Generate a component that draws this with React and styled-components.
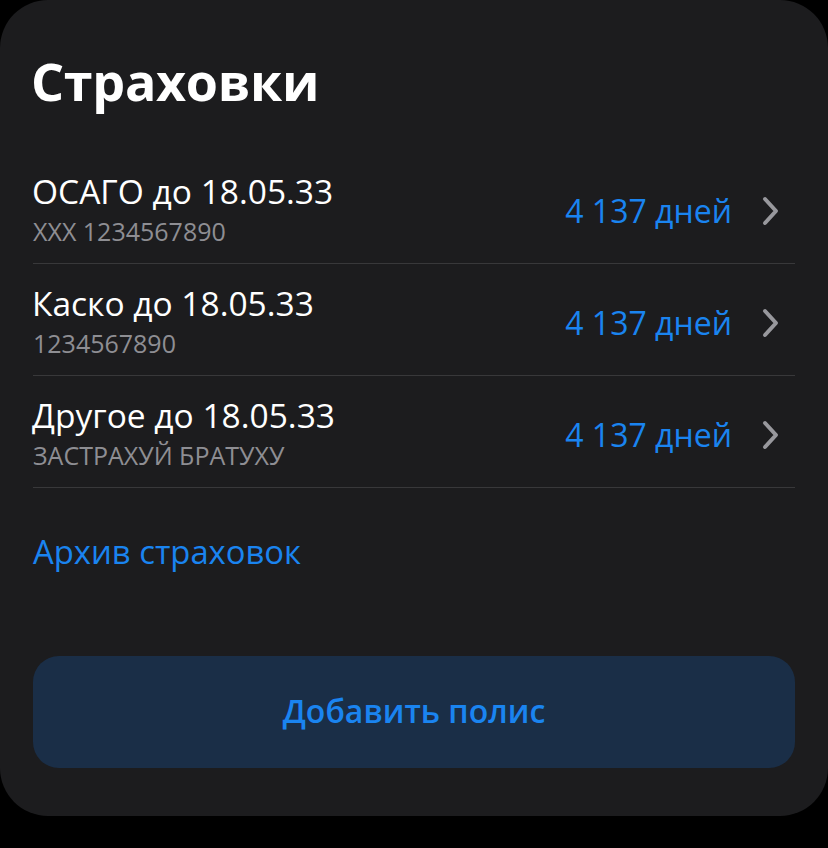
import React from 'react'
import styled, { createGlobalStyle } from 'styled-components'

const GlobalStyle = createGlobalStyle`
  html, body {
    margin: 0;
    padding: 0;
    background: #000;
  }
  body {
    font-family: "Open Sans", "Noto Sans", sans-serif;
    -webkit-font-smoothing: antialiased;
  }
`;

const Card = styled.div`
  width: 828px;
  height: 816px;
  box-sizing: border-box;
  background: #1c1c1e;
  border-radius: 48px;
  padding: 0 33px;
  display: flex;
  flex-direction: column;
`;

const Title = styled.h1`
  margin: 0 0 0 -2px;
  padding-top: 44px;
  font-size: 52px;
  line-height: 74px;
  font-weight: 700;
  color: #fff;
  letter-spacing: -0.3px;
`;

const List = styled.ul`
  list-style: none;
  margin: 34px 0 0;
  padding: 0;
`;

const Row = styled.li`
  height: 112px;
  box-sizing: border-box;
  display: flex;
  align-items: center;
  border-bottom: 1px solid #38383a;
  cursor: pointer;
`;

const Info = styled.div`
  flex: 1;
  display: flex;
  flex-direction: column;
`;

const Name = styled.span`
  font-size: 33.5px;
  line-height: 46px;
  color: #fff;
  margin-left: -1px;
`;

const Number = styled.span`
  font-size: 25px;
  line-height: 34px;
  color: #8e8e93;
`;

const Days = styled.span`
  font-size: 32px;
  color: #1a84f0;
  margin: 6px 30px 0 0;
`;

const Chevron = styled.svg`
  width: 18px;
  height: 30px;
  margin: 6px 15px 0 0;
`;

const Archive = styled.a`
  display: block;
  margin-top: 44px;
  font-size: 32.8px;
  line-height: 40px;
  color: #1a84f0;
  text-decoration: none;
`;

const AddButton = styled.button`
  margin-top: 84px;
  height: 112px;
  width: 100%;
  border: none;
  border-radius: 26px;
  background: #1a2e47;
  color: #1a84f0;
  font-family: inherit;
  font-size: 32px;
  font-weight: 600;
  padding-bottom: 4px;
  cursor: pointer;
`;

const policies = [
  { name: 'ОСАГО до 18.05.33', number: 'XXX 1234567890', days: '4 137 дней' },
  { name: 'Каско до 18.05.33', number: '1234567890', days: '4 137 дней' },
  { name: 'Другое до 18.05.33', number: 'ЗАСТРАХУЙ БРАТУХУ', days: '4 137 дней' },
];

export default function App() {
  return (
    <>
      <GlobalStyle />
      <Card>
        <Title>Страховки</Title>
        <List>
          {policies.map((p, i) => (
            <Row key={i}>
              <Info>
                <Name>{p.name}</Name>
                <Number>{p.number}</Number>
              </Info>
              <Days>{p.days}</Days>
              <Chevron viewBox="0 0 18 30" fill="none">
                <path d="M3 3l11 12-11 12" stroke="#98989d" strokeWidth="4" strokeLinecap="round" strokeLinejoin="round" />
              </Chevron>
            </Row>
          ))}
        </List>
        <Archive href="#">Архив страховок</Archive>
        <AddButton>Добавить полис</AddButton>
      </Card>
    </>
  )
}
